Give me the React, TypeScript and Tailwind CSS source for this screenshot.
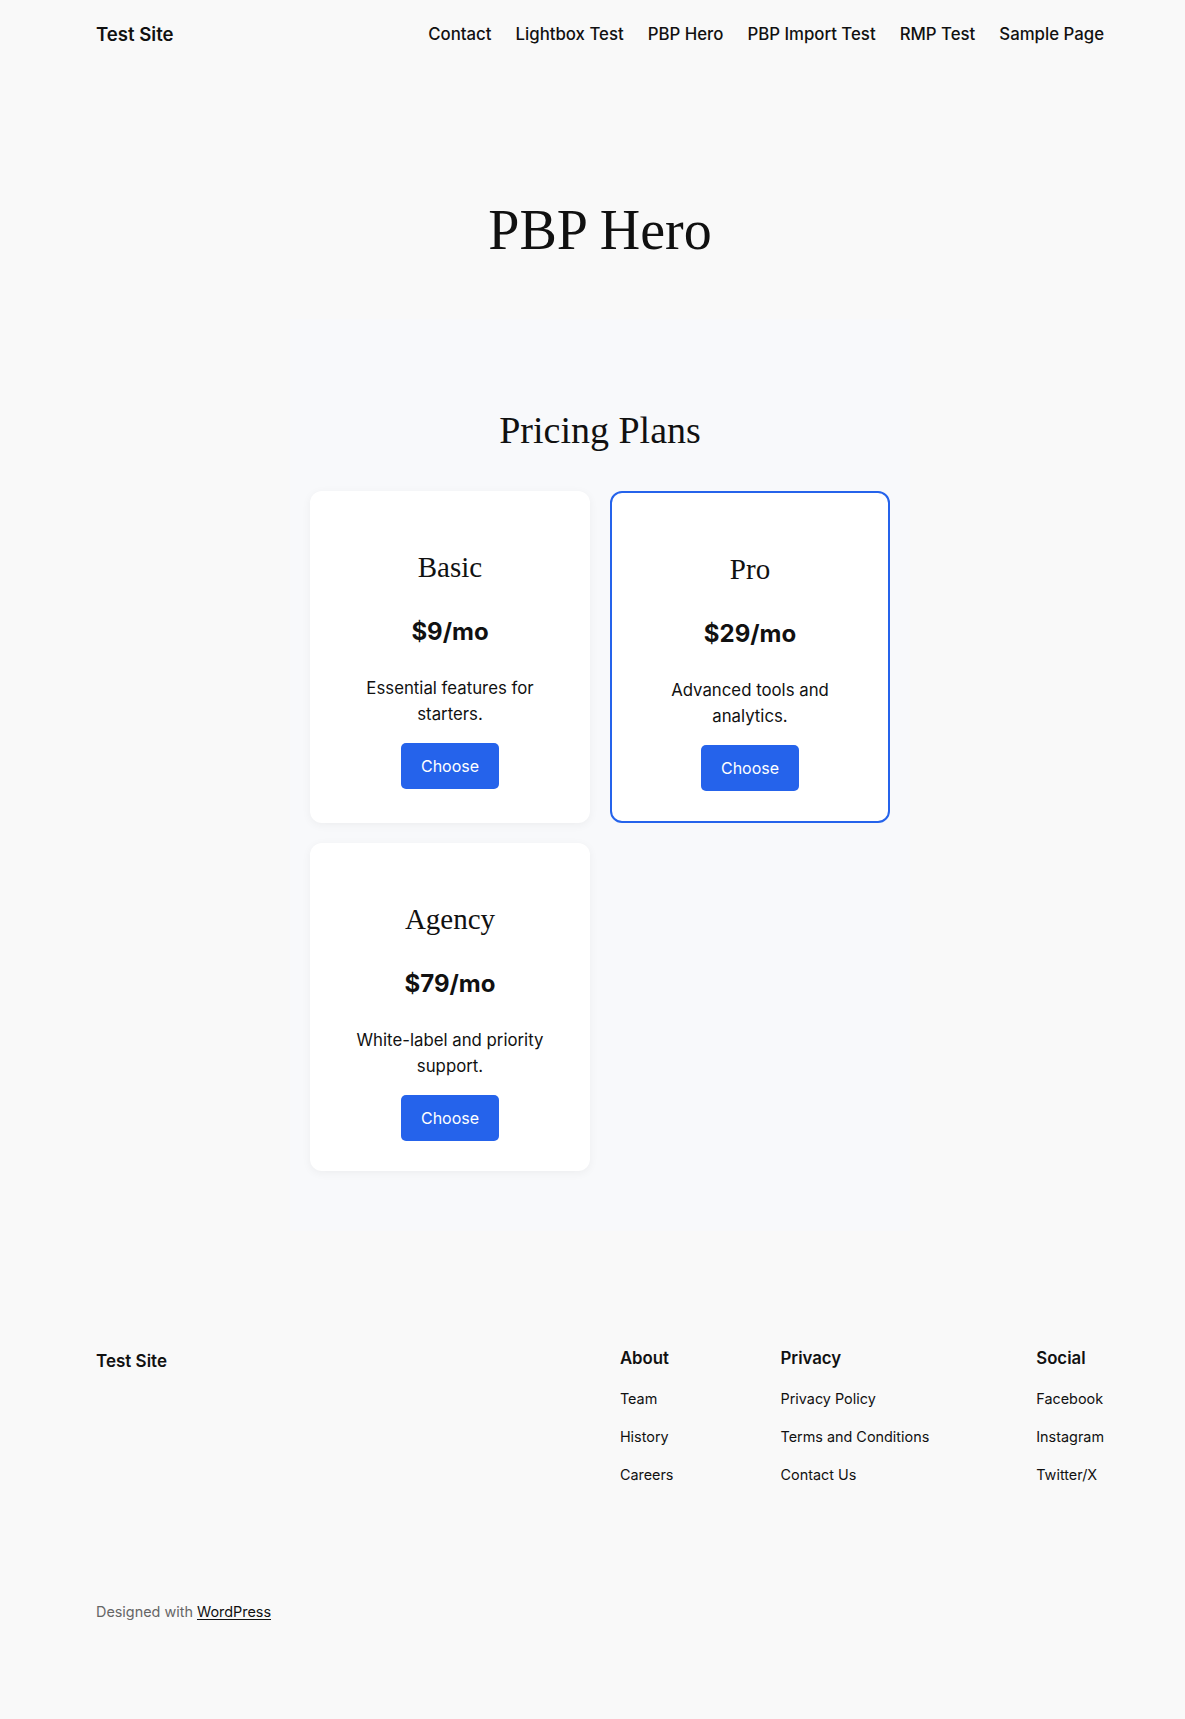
import React from "react";

const serif = "font-['Liberation_Serif',serif]";

type Plan = { name: string; price: string; desc: string; featured?: boolean };

const plans: Plan[] = [
  { name: "Basic", price: "$9/mo", desc: "Essential features for starters." },
  { name: "Pro", price: "$29/mo", desc: "Advanced tools and analytics.", featured: true },
  { name: "Agency", price: "$79/mo", desc: "White-label and priority support." },
];

function PlanCard({ plan }: { plan: Plan }) {
  return (
    <div
      className={
        plan.featured
          ? "flex flex-col items-center rounded-xl border-2 border-[#2563eb] bg-white px-8 pt-[58px] pb-[30px] text-center"
          : "flex flex-col items-center rounded-xl bg-white px-8 pt-[58px] pb-[30px] text-center shadow-[0_2px_10px_rgba(0,0,0,0.05)]"
      }
    >
      <h3 className={`${serif} text-[29px] leading-[36px] text-[#111]`}>{plan.name}</h3>
      <p className="mt-[31px] text-[24px] leading-[32px] font-bold text-[#111]">{plan.price}</p>
      <p className="mt-[27px] text-[16.8px] leading-[26px] text-[#111]">{plan.desc}</p>
      <button className="mt-[16px] h-[46px] rounded-[5px] bg-[#2563eb] px-5 text-[16px] text-white">
        Choose
      </button>
    </div>
  );
}

function FooterColumn({ title, links }: { title: string; links: string[] }) {
  return (
    <div className="flex flex-col">
      <h4 className="text-[16.8px] leading-[24px] font-semibold text-[#111]">{title}</h4>
      <ul className="mt-[19px] flex flex-col gap-[18px]">
        {links.map((l) => (
          <li key={l} className="text-[14.4px] leading-[20px] text-[#111]">
            {l}
          </li>
        ))}
      </ul>
    </div>
  );
}

export default function App() {
  const nav = ["Contact", "Lightbox Test", "PBP Hero", "PBP Import Test", "RMP Test", "Sample Page"];
  return (
    <div className="min-h-[1719px] bg-[#f9f9f9] font-['Inter',sans-serif] text-[#111]">
      <div className="pl-[96px] pr-[81px]">
        {/* Site header */}
        <header className="flex h-[70px] items-center justify-between">
          <a className="text-[18.6px] font-semibold text-[#111]">Test Site</a>
          <nav className="flex items-center gap-[24px] text-[16.8px] font-medium">
            {nav.map((n) => (
              <a key={n}>{n}</a>
            ))}
          </nav>
        </header>

        <main className="flex flex-col items-center">
          <h1 className={`${serif} mt-[127px] text-[56px] leading-[67px] text-[#111]`}>PBP Hero</h1>

          {/* Pricing section */}
          <section className="mt-[55px] w-[620px] bg-[#f8f9fb] px-5 pt-[87px] pb-[60px]">
            <h2 className={`${serif} text-center text-[38px] leading-[48px] text-[#111]`}>Pricing Plans</h2>
            <div className="mt-[37px] grid grid-cols-2 gap-5">
              {plans.map((p) => (
                <PlanCard key={p.name} plan={p} />
              ))}
            </div>
          </section>
        </main>

        {/* Site footer */}
        <footer className="mt-[115px]">
          <div className="flex items-start justify-between">
            <div className="pt-[3px] text-[17px] leading-[24px] font-semibold">Test Site</div>
            <div className="flex gap-[107px]">
              <FooterColumn title="About" links={["Team", "History", "Careers"]} />
              <FooterColumn title="Privacy" links={["Privacy Policy", "Terms and Conditions", "Contact Us"]} />
              <FooterColumn title="Social" links={["Facebook", "Instagram", "Twitter/X"]} />
            </div>
          </div>
          <p className="mt-[117px] text-[14.4px] leading-[20px] text-[#666]">
            Designed with{" "}
            <a className="text-[#111] underline underline-offset-2">WordPress</a>
          </p>
        </footer>
      </div>
    </div>
  );
}
